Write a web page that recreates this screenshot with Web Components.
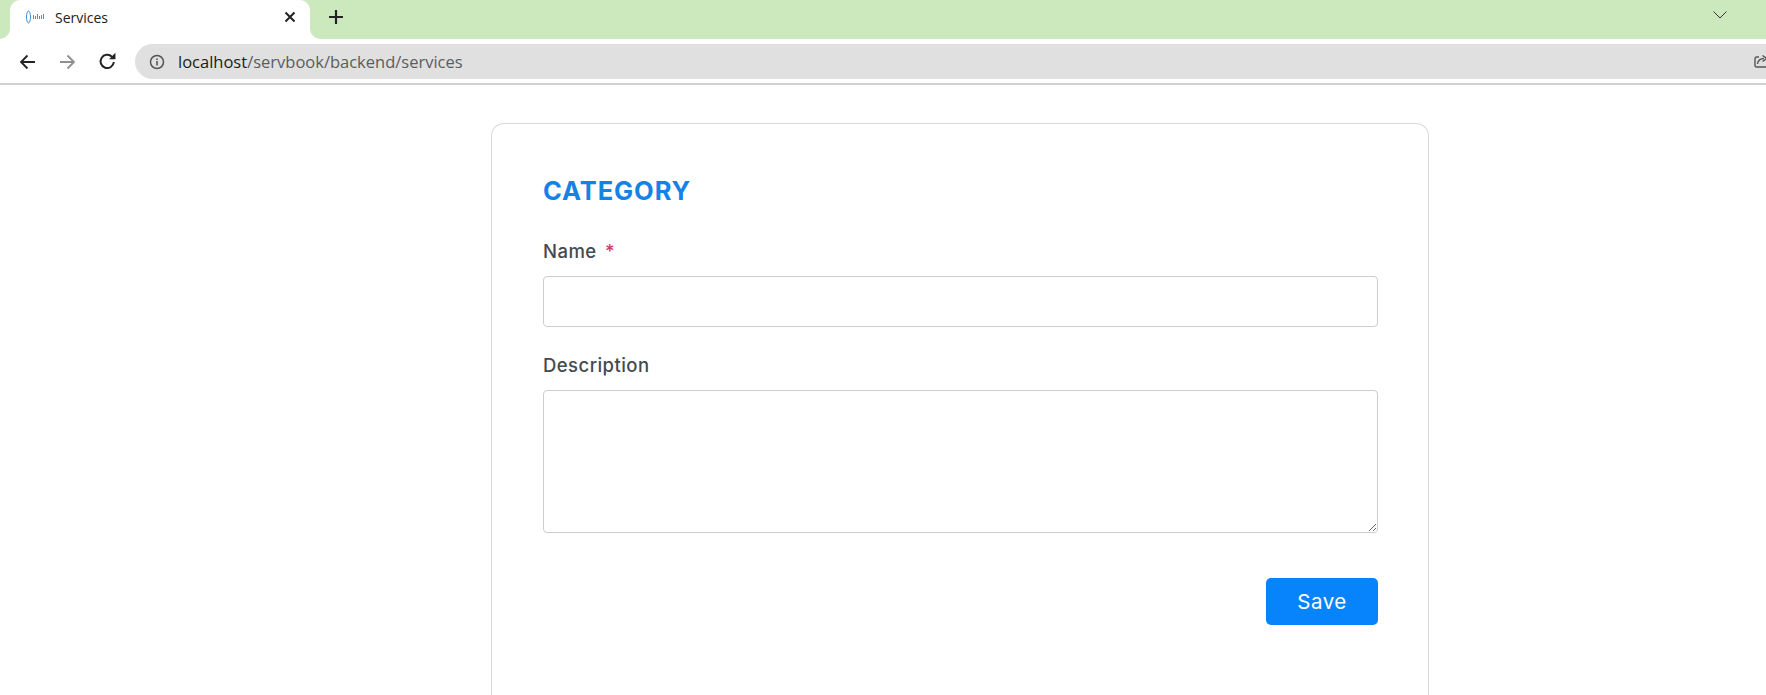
<!DOCTYPE html>
<html>
<head>
<meta charset="utf-8">
<title>Services</title>
<style>
html, body { margin: 0; height: 100%; overflow: hidden; background: #fff; }
body { font-family: "Open Sans", sans-serif; }
</style>
</head>
<body>
<browser-tabs title-text="Services"></browser-tabs>
<browser-toolbar url-host="localhost" url-path="/servbook/backend/services"></browser-toolbar>
<page-body>
    <form-card heading="CATEGORY">
        <form-field label="Name" required></form-field>
        <form-field label="Description" multiline></form-field>
        <save-button>Save</save-button>
    </form-card>
</page-body>

<script>
class BrowserTabs extends HTMLElement {
    constructor() {
        super();
        this.attachShadow({ mode: "open" });
        this.shadowRoot.innerHTML = `
            <style>
                :host {
                    display: flex;
                    height: 39px;
                    background: #cce9be;
                    position: relative;
                    font-family: "Open Sans", sans-serif;
                }
                .tab {
                    width: 300px;
                    margin-left: 10px;
                    background: #fff;
                    border-radius: 10px 10px 0 0;
                    display: flex;
                    align-items: center;
                    box-sizing: border-box;
                    padding: 0 12px 5px 15px;
                    position: relative;
                }
                .tab::before, .tab::after {
                    content: "";
                    position: absolute;
                    bottom: 0;
                    width: 10px;
                    height: 10px;
                    background: radial-gradient(circle at 0 0, #cce9be 9.5px, #fff 10px);
                }
                .tab::before { left: -10px; }
                .tab::after { right: -10px; transform: scaleX(-1); }
                .favicon { width: 22px; height: 16px; margin-right: 8px; flex: none; }
                .title { flex: 1; font-size: 14px; color: #222; }
                .close { width: 12px; height: 12px; margin-right: 2px; }
                .plus { width: 16px; height: 16px; margin: 9px 0 0 18px; }
                .chevron { position: absolute; left: 1713px; top: 11px; width: 14px; height: 8px; }
            </style>
            <div class="tab">
                <svg class="favicon" viewBox="0 0 22 16">
                    <ellipse cx="3.5" cy="8" rx="2" ry="6" fill="none" stroke="#4a90cc" stroke-width="1"/>
                    <path d="M8 6h1v4H8zM10 7h1v3h-1zM12 5h1v5h-1zM14 7h1v3h-1zM16 6h1v4h-1zM18 5h1v5h-1z" fill="#6d87a3"/>
                </svg>
                <span class="title"></span>
                <svg class="close" viewBox="0 0 12 12"><path d="M1.5 1.5l9 9M10.5 1.5l-9 9" stroke="#222" stroke-width="2" fill="none"/></svg>
            </div>
            <svg class="plus" viewBox="0 0 16 16"><path d="M8 1v14M1 8h14" stroke="#222" stroke-width="2.2" fill="none"/></svg>
            <svg class="chevron" viewBox="0 0 14 8"><path d="M.5.5L7 7 13.5.5" stroke="#333" stroke-width="1" fill="none"/></svg>
        `;
    }

    connectedCallback() {
        this.shadowRoot.querySelector(".title").textContent = this.getAttribute("title-text");
    }
}

class BrowserToolbar extends HTMLElement {
    constructor() {
        super();
        this.attachShadow({ mode: "open" });
        this.shadowRoot.innerHTML = `
            <style>
                :host {
                    display: flex;
                    align-items: center;
                    height: 46px;
                    box-sizing: border-box;
                    padding: 5px 0 4px 19px;
                    background: #fff;
                    border-bottom: 2px solid #d0d0d0;
                    font-family: "Open Sans", sans-serif;
                }
                svg { flex: none; }
                .back { width: 17px; height: 16px; }
                .forward { width: 17px; height: 16px; margin-left: 23px; }
                .reload { width: 19px; height: 19px; margin-left: 22px; }
                .bar {
                    flex: 1;
                    height: 35px;
                    margin-left: 18px;
                    background: #e0e0e0;
                    border-radius: 18px 0 0 18px;
                    display: flex;
                    align-items: center;
                    padding-left: 14px;
                    position: relative;
                    font-size: 16.5px;
                    color: #5c5c5c;
                }
                .info { width: 16px; height: 16px; margin-right: 13px; }
                .host { color: #1c1c1c; }
                .share { position: absolute; left: 1619px; top: 9px; width: 14px; height: 16px; }
            </style>
            <svg class="back" viewBox="0 0 17 16"><path d="M16 8H2M8.5 1.5L2 8l6.5 6.5" stroke="#222" stroke-width="1.8" fill="none"/></svg>
            <svg class="forward" viewBox="0 0 17 16"><path d="M1 8h14M8.5 1.5L15 8l-6.5 6.5" stroke="#8f8f8f" stroke-width="1.8" fill="none"/></svg>
            <svg class="reload" viewBox="0 0 18 18"><path d="M15 9.5A6.3 6.3 0 1 1 13.2 4.5" stroke="#222" stroke-width="1.9" fill="none"/><path d="M10.5 6.8h6v-6z" fill="#222"/></svg>
            <div class="bar">
                <svg class="info" viewBox="0 0 16 16"><circle cx="8" cy="8" r="6.5" stroke="#555" stroke-width="1.5" fill="none"/><path d="M7.2 7h1.6v4.5H7.2zM7.2 4.4h1.6V6H7.2z" fill="#555"/></svg>
                <span><span class="host"></span><span class="path"></span></span>
                <svg class="share" viewBox="0 0 14 16"><path d="M5 4H2.5A1.5 1.5 0 0 0 1 5.500v7A1.500 1.500 0 0 0 2.500 14h9a1.500 1.500 0 0 0 1.500-1.500V9" stroke="#555" stroke-width="1.400" fill="none"/><path d="M3.500 11c.5-3.500 3-5.500 6.500-5.500M8.500 2.500l4.500 3-4.500 3" stroke="#555" stroke-width="1.400" fill="none"/></svg>
            </div>
        `;
    }

    connectedCallback() {
        this.shadowRoot.querySelector(".host").textContent = this.getAttribute("url-host");
        this.shadowRoot.querySelector(".path").textContent = this.getAttribute("url-path");
    }
}

class PageBody extends HTMLElement {
    constructor() {
        super();
        this.attachShadow({ mode: "open" });
        this.shadowRoot.innerHTML = `
            <style>
                :host {
                    display: block;
                    box-sizing: border-box;
                    height: 610px;
                    padding: 38px 337px 0 491px;
                    font-family: "Inter", sans-serif;
                }
            </style>
            <slot></slot>
        `;
    }
}

class FormCard extends HTMLElement {
    constructor() {
        super();
        this.attachShadow({ mode: "open" });
        this.shadowRoot.innerHTML = `
            <style>
                :host {
                    display: block;
                    box-sizing: border-box;
                    height: 572px;
                    border: 1px solid #d9d9d9;
                    border-bottom: none;
                    border-radius: 13px 13px 0 0;
                    padding: 51px 50px 0 51px;
                }
                h2 {
                    margin: 0 0 31px;
                    font-size: 25.5px;
                    line-height: 32px;
                    font-weight: 700;
                    letter-spacing: 0.9px;
                    color: #1582e6;
                }
            </style>
            <h2></h2>
            <slot></slot>
        `;
    }

    connectedCallback() {
        this.shadowRoot.querySelector("h2").textContent = this.getAttribute("heading");
    }
}

class FormField extends HTMLElement {
    constructor() {
        super();
        this.attachShadow({ mode: "open" });
        this.shadowRoot.innerHTML = `
            <style>
                :host {
                    display: block;
                    margin-bottom: 25px;
                }
                label {
                    display: block;
                    margin-bottom: 11px;
                    font-size: 18.5px;
                    line-height: 27px;
                    font-weight: 450;
                    letter-spacing: 0.45px;
                    color: #434a50;
                }
                .req { color: #d6336c; margin-left: 3px; }
                input, textarea {
                    display: block;
                    width: 100%;
                    box-sizing: border-box;
                    border: 1px solid #cdcdcd;
                    border-radius: 4px;
                    background: #fff;
                    outline: none;
                    margin: 0;
                }
                input { height: 51px; }
                textarea { height: 143px; margin-bottom: 45px; resize: vertical; }
            </style>
            <label></label>
        `;
    }

    connectedCallback() {
        const label = this.shadowRoot.querySelector("label");
        label.textContent = this.getAttribute("label");
        if (this.hasAttribute("required")) {
            const star = document.createElement("span");
            star.className = "req";
            star.textContent = " *";
            label.append(star);
        }
        const control = document.createElement(this.hasAttribute("multiline") ? "textarea" : "input");
        this.shadowRoot.append(control);
    }
}

class SaveButton extends HTMLElement {
    constructor() {
        super();
        this.attachShadow({ mode: "open" });
        this.shadowRoot.innerHTML = `
            <style>
                :host {
                    display: flex;
                    justify-content: flex-end;
                }
                button {
                    width: 112px;
                    height: 47px;
                    border: none;
                    border-radius: 5px;
                    background: #0784fb;
                    color: #fff;
                    font-family: inherit;
                    font-size: 20.5px;
                    letter-spacing: 0.5px;
                    cursor: pointer;
                }
            </style>
            <button><slot></slot></button>
        `;
    }
}

customElements.define("browser-tabs", BrowserTabs);
customElements.define("browser-toolbar", BrowserToolbar);
customElements.define("page-body", PageBody);
customElements.define("form-card", FormCard);
customElements.define("form-field", FormField);
customElements.define("save-button", SaveButton);
</script>
</body>
</html>
